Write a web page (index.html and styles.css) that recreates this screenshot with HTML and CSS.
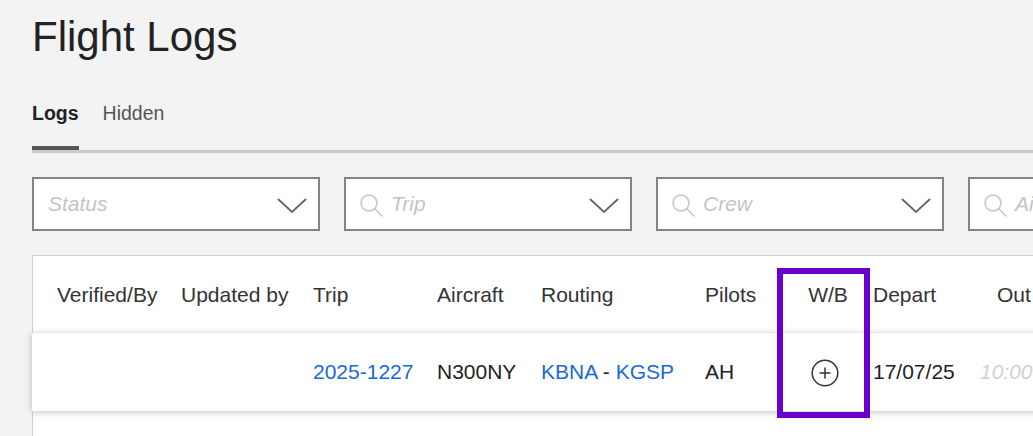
FILE: index.html
```html
<!DOCTYPE html>
<html lang="en">
	<head>
		<meta charset="UTF-8" />
		<meta name="viewport" content="width=device-width, initial-scale=1.0" />

		<link rel="stylesheet" href="styles.css">

		<title>Flight Logs</title>
	</head>
	<body>
		<div class="page">
			<h1 class="title">Flight Logs</h1>

			<div class="tabs">
				<a class="tab active">Logs</a>
				<a class="tab">Hidden</a>
			</div>

			<div class="filters">
				<div class="filter">
					<span class="placeholder">Status</span>
					<svg class="chevron" viewBox="0 0 30 15"><path d="M1 1 L15 14 L29 1" /></svg>
				</div>
				<div class="filter">
					<svg class="search" viewBox="0 0 24 24"><circle cx="9" cy="9" r="8" /><path d="M14.8 14.8 L22.5 22.5" /></svg>
					<span class="placeholder">Trip</span>
					<svg class="chevron" viewBox="0 0 30 15"><path d="M1 1 L15 14 L29 1" /></svg>
				</div>
				<div class="filter">
					<svg class="search" viewBox="0 0 24 24"><circle cx="9" cy="9" r="8" /><path d="M14.8 14.8 L22.5 22.5" /></svg>
					<span class="placeholder">Crew</span>
					<svg class="chevron" viewBox="0 0 30 15"><path d="M1 1 L15 14 L29 1" /></svg>
				</div>
				<div class="filter">
					<svg class="search" viewBox="0 0 24 24"><circle cx="9" cy="9" r="8" /><path d="M14.8 14.8 L22.5 22.5" /></svg>
					<span class="placeholder">Aircraft</span>
					<svg class="chevron" viewBox="0 0 30 15"><path d="M1 1 L15 14 L29 1" /></svg>
				</div>
			</div>

			<div class="logs">
				<div class="row head">
					<div>Verified/By</div>
					<div>Updated by</div>
					<div>Trip</div>
					<div>Aircraft</div>
					<div>Routing</div>
					<div>Pilots</div>
					<div class="center wb">W/B</div>
					<div>Depart</div>
					<div class="out">Out</div>
				</div>
				<div class="row item">
					<div></div>
					<div></div>
					<div><a class="link">2025-1227</a></div>
					<div>N300NY</div>
					<div><a class="link">KBNA</a> - <a class="link">KGSP</a></div>
					<div>AH</div>
					<div class="center">
						<svg class="add" viewBox="0 0 28 28"><circle cx="14" cy="14" r="12.8" /><path d="M14 8.5 V19.5 M8.5 14 H19.5" /></svg>
					</div>
					<div>17/07/25</div>
					<div class="time">10:00</div>
				</div>
				<div class="rest"></div>

				<div class="highlight"></div>
			</div>
		</div>
	</body>
</html>
```

FILE: styles.css
```css
body {
	margin: 0;
	background-color: #f3f3f3;
	font-family: "Liberation Sans", Arial, sans-serif;
	color: #222;
	overflow: hidden;
}

.page {
	padding-left: 32px;
}

.title {
	margin: 13px 0 0;
	font-size: 42px;
	line-height: 48px;
	font-weight: normal;
	color: #222;
}

.tabs {
	display: flex;
	align-items: flex-end;
	gap: 24px;
	margin-top: 40px;
	border-bottom: 3px solid #c8c8c8;

	.tab {
		font-size: 19.5px;
		line-height: 24px;
		color: #555;
		padding-bottom: 21px;
		border-bottom: 4px solid transparent;
		cursor: pointer;
	}

	.active {
		font-weight: bold;
		color: #222;
		border-bottom-color: #555;
	}
}

.filters {
	display: flex;
	gap: 24px;
	margin-top: 24px;
}

.filter {
	flex: 0 0 288px;
	box-sizing: border-box;
	height: 54px;
	display: flex;
	align-items: center;
	padding: 0 11px 0 14px;
	background-color: white;
	border: 2px solid #858585;

	.placeholder {
		flex: 1;
		font-size: 21px;
		font-style: italic;
		color: #c4c4c4;
	}

	.search {
		width: 24px;
		height: 24px;
		margin: 3px 7px 0 0;
		fill: none;
		stroke: #c8c8c8;
		stroke-width: 1.6;
	}

	.chevron {
		width: 30px;
		height: 15px;
		margin-top: 2px;
		fill: none;
		stroke: #666;
		stroke-width: 1.8;
	}
}

.logs {
	position: relative;
	width: 1200px;
	margin-top: 24px;
	background-color: white;
	border-top: 1px solid #d0d0d0;
	border-left: 1px solid #d0d0d0;
}

.row {
	display: grid;
	grid-template-columns: 124px 132px 124px 104px 164px 72px 96px 107px auto;
	align-items: center;
	height: 78px;
	padding-left: 24px;
	font-size: 21px;
	white-space: nowrap;
	background-color: white;

	.center {
		text-align: center;
	}
}

.head {
	height: 77px;
	color: #333;

	.wb {
		padding-left: 6px;
	}

	.out {
		padding-left: 17px;
	}
}

.item {
	position: relative;
	margin-left: -1px;
	padding-left: 25px;
	box-shadow: 0 1px 7px rgba(0, 0, 0, 0.25);

	.link {
		color: #1769dc;
		cursor: pointer;
	}

	.time {
		font-style: italic;
		color: #d0d0d0;
	}

	.add {
		display: block;
		width: 28px;
		height: 28px;
		margin: 2px auto 0;
		fill: none;
		stroke: #333;
		stroke-width: 1.5;
	}
}

.rest {
	height: 40px;
}

/* marks the weight and balance column */
.highlight {
	position: absolute;
	left: 744px;
	top: 12px;
	width: 93px;
	height: 150px;
	box-sizing: border-box;
	border: 6px solid #6a00cc;
	z-index: 2;
}
```
